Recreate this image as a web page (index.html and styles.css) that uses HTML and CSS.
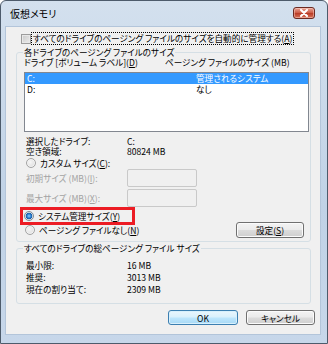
FILE: index.html
```html
<!DOCTYPE html>
<html lang="ja">
<head>
<meta charset="utf-8">
<title>仮想メモリ</title>
<link rel="stylesheet" href="styles.css">
</head>
<body>
<div class="window">
  <div class="titlebar">
    <span class="title">仮想メモリ</span>
    <span class="close">
      <svg width="10" height="8" viewBox="0 0 10 8"><path d="M2 1 L8 7 M8 1 L2 7" stroke="#fff" stroke-width="2" stroke-linecap="round"/></svg>
    </span>
  </div>
  <div class="client">
    <div class="auto-row">
      <span class="checkbox"></span>
      <span class="focus">すべてのドライブのページング ファイルのサイズを自動的に管理する(<u>A</u>)</span>
    </div>

    <fieldset class="group group-drives">
      <legend>各ドライブのページング ファイルのサイズ</legend>
      <div class="col-head">
        <span class="c1">ドライブ [ボリューム ラベル](<u>D</u>)</span>
        <span class="c2">ページング ファイルのサイズ (MB)</span>
      </div>
      <div class="listbox">
        <div class="row selected"><span class="c1">C:</span><span class="c2">管理されるシステム</span></div>
        <div class="row"><span class="c1">D:</span><span class="c2">なし</span></div>
      </div>
      <div class="info">
        <span>選択したドライブ:</span><span>C:</span>
        <span>空き領域:</span><span>80824 MB</span>
      </div>
      <div class="radio-row custom">
        <span class="radio"></span>
        <span>カスタム サイズ(<u>C</u>):</span>
      </div>
      <div class="size-row">
        <span class="size-label disabled">初期サイズ (MB)(<u>I</u>):</span>
        <span class="textbox"></span>
      </div>
      <div class="size-row second">
        <span class="size-label disabled">最大サイズ (MB)(<u>X</u>):</span>
        <span class="textbox"></span>
      </div>
      <div class="highlight">
        <span class="radio checked"></span>
        <span>システム管理サイズ(<u>Y</u>)</span>
      </div>
      <div class="none-row">
        <div class="radio-row">
          <span class="radio"></span>
          <span>ページング ファイルなし(<u>N</u>)</span>
        </div>
        <span class="button set-btn">設定(<u>S</u>)</span>
      </div>
    </fieldset>

    <fieldset class="group group-total">
      <legend>すべてのドライブの総ページング ファイル サイズ</legend>
      <div class="totals">
        <span>最小限:</span><span>16 MB</span>
        <span>推奨:</span><span>3013 MB</span>
        <span>現在の割り当て:</span><span>2309 MB</span>
      </div>
    </fieldset>

    <div class="buttons">
      <span class="button default">OK</span>
      <span class="button">キャンセル</span>
    </div>
  </div>
</div>
</body>
</html>
```

FILE: styles.css
```css
* { box-sizing: border-box; }
html, body { margin: 0; padding: 0; }
body {
  width: 328px;
  height: 344px;
  overflow: hidden;
  background: #ffffff;
  font-family: "Noto Sans CJK JP", "Noto Sans", sans-serif;
  font-size: 8.6px;
  line-height: 10px;
  font-feature-settings: "palt";
  color: #000;
  white-space: nowrap;
}
u { text-decoration: underline; text-underline-offset: 1px; }

.window {
  width: 328px;
  height: 344px;
  display: flex;
  flex-direction: column;
  background: linear-gradient(#d3e0ee, #c0d2e6 60%, #c7d7ea);
  border: 1px solid #4d5b6b;
  border-radius: 6px 6px 0 0;
  padding: 0 6px 8px 4px;
}

.titlebar {
  height: 25px;
  flex: none;
  display: flex;
  align-items: center;
  justify-content: space-between;
  padding: 0 6px 0 5px;
}
.title { font-size: 10px; color: #000; }
.close {
  width: 22px;
  height: 12px;
  display: flex;
  align-items: center;
  justify-content: center;
  border: 1px solid #6b2a22;
  border-radius: 3px;
  background: linear-gradient(#e8a597, #cc5842 50%, #b83a25 52%, #d8735a);
  box-shadow: inset 0 0 0 1px rgba(255, 220, 210, 0.45);
  margin-top: -1px;
}

.client {
  flex: 1;
  background: #f0f0f0;
  border: 1px solid #b3c5da;
  display: flex;
  flex-direction: column;
}

.auto-row {
  margin-top: 6px;
  height: 11px;
  display: flex;
  align-items: center;
  padding-left: 15px;
}
.checkbox {
  width: 10px;
  height: 10px;
  flex: none;
  border: 1px solid #9c9c9c;
  background: linear-gradient(135deg, #c9c9c9, #ececec);
  box-shadow: inset 0 0 0 1px #e8e8e8;
}
.focus {
  margin-left: 1px;
  padding: 0 1px;
  outline: 1px dotted #000;
  outline-offset: 0;
  line-height: 11px;
}

.group {
  margin: 0 9px 0 10px;
  padding: 0;
  border: 1px solid #d5dfe5;
  border-radius: 3px;
  min-width: 0;
}
.group legend {
  margin-left: 6px;
  padding: 0 1px;
  line-height: 10px;
}
.group-drives { margin-top: 3px; padding-bottom: 3px; }

.col-head {
  display: flex;
  padding-left: 7px;
  height: 10px;
  line-height: 10px;
}
.c1 { width: 141px; flex: none; }

.listbox {
  margin: 5px 0 0 7px;
  width: 285px;
  height: 60px;
  background: #fff;
  border: 1px solid #828790;
}
.row {
  display: flex;
  height: 11px;
  line-height: 11px;
  padding-left: 2px;
}
.row .c1 { width: 169px; }
.row.selected { background: #3399ff; color: #fff; }

.info, .totals {
  display: grid;
  grid-template-columns: 101px auto;
  padding-left: 9px;
}
.info { margin-top: 4px; }

.radio-row {
  display: flex;
  align-items: center;
  height: 11px;
  gap: 4px;
}
.radio-row.custom { margin-top: 1px; padding-left: 9px; }

.radio {
  width: 10px;
  height: 10px;
  border-radius: 50%;
  border: 1px solid #a3a3a3;
  background: radial-gradient(circle at 40% 40%, #f6f6f6, #d6d6d6);
  box-shadow: inset 0 0 0 1px #f4f4f4;
  flex: none;
}
.radio.checked {
  border-color: #7f8a94;
  background: radial-gradient(circle, #8fd0ff 0, #2a7fd0 2px, #1b5fa6 3px, #dfe3e7 3.6px, #eef0f2 5px);
  box-shadow: none;
}

.size-row {
  display: flex;
  align-items: center;
  height: 18px;
  margin-top: 1px;
  padding-left: 9px;
}
.size-row.second { margin-top: 2px; }
.size-label { width: 101px; flex: none; }
.disabled { color: #a3a3a3; }
.textbox {
  width: 70px;
  height: 18px;
  border: 1px solid #c9c9c9;
  border-radius: 2px;
  background: #f0f0f0;
}

.highlight {
  align-self: flex-start;
  display: flex;
  align-items: center;
  gap: 4px;
  margin-left: 3px;
  width: 115px;
  height: 18px;
  border: 3px solid #ec1c24;
  padding-left: 1px;
}

.none-row {
  display: flex;
  align-items: center;
  justify-content: space-between;
  height: 16px;
  margin-top: -3px;
  padding-left: 8px;
  padding-right: 6px;
}

.button {
  display: flex;
  align-items: center;
  justify-content: center;
  border: 1px solid #707070;
  border-radius: 3px;
  background: linear-gradient(#f3f3f3 0%, #ebebeb 48%, #dcdcdc 52%, #cfcfcf 100%);
  box-shadow: inset 0 0 0 1px #fbfbfb;
}
.set-btn { width: 68px; height: 16px; }

.group-total { margin-top: 1px; padding: 6px 0 8px; }
.totals { line-height: 12px; }

.buttons {
  display: flex;
  justify-content: flex-end;
  gap: 8px;
  margin: 6px 5px 0 0;
}
.buttons .button { width: 70px; height: 15px; }
.buttons .button:last-child { width: 69px; }
.button.default {
  border-color: #3c7fb1;
  background: linear-gradient(#eaf6fd 0%, #d9f0fc 48%, #bee6fd 52%, #a7d9f5 100%);
  box-shadow: inset 0 0 0 1px #d8f0fc;
}
```
